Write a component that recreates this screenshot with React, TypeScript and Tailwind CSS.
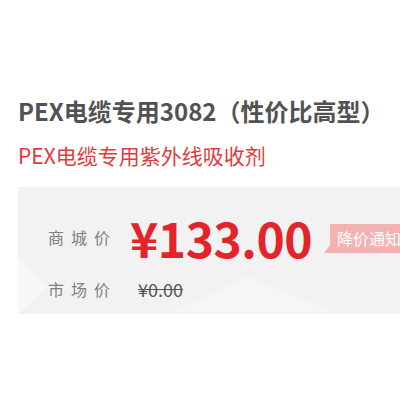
import React from "react";

export default function App() {
  return (
    <div className="w-[400px] h-[400px] bg-white overflow-hidden" style={{ fontFamily: '"Noto Sans CJK SC", "Noto Sans", sans-serif' }}>
      <div className="pt-[94px] pl-[18px]">
        <h1 className="text-[24px] leading-[34px] font-bold text-[#525252] whitespace-nowrap">PEX电缆专用3082（性价比高型）</h1>
        <p className="mt-[12px] text-[21px] leading-[30px] text-[#e4393c] whitespace-nowrap">PEX电缆专用紫外线吸收剂</p>
        <div className="mt-[17px] h-[127px] bg-[#f2f2f2] relative overflow-hidden">
          <svg className="absolute inset-0" width="382" height="127" viewBox="0 0 382 127">
            <polygon points="0,70 30,100 0,127" fill="#f7f7f7" />
            <polygon points="150,127 230,90 320,127" fill="#f6f6f6" />
          </svg>
          <div className="relative pl-[30px] pt-[27px]">
            <div className="flex items-center h-[46px]">
              <span className="shrink-0 whitespace-nowrap text-[16px] tracking-[7px] text-[#808080] w-[82px]">商城价</span>
              <span className="shrink-0 whitespace-nowrap text-[48px] leading-none font-bold text-[#e4242a] tracking-[-0.5px]">¥133.00</span>
              <div className="ml-[18px] mt-[2px] relative flex items-center shrink-0">
                <div className="h-[29px] pl-[7px] pr-[20px] bg-[#f5b2b2] text-white text-[16px] leading-[29px] whitespace-nowrap">降价通知</div>
                <svg className="absolute left-[-6px] bottom-0" width="6" height="8" viewBox="0 0 6 8">
                  <polygon points="6,0 0,8 6,8" fill="#f5b2b2" />
                </svg>
              </div>
            </div>
            <div className="flex items-center h-[24px] mt-[17px]">
              <span className="shrink-0 whitespace-nowrap text-[16px] tracking-[7px] text-[#808080] w-[90px]">市场价</span>
              <span className="text-[18px] text-[#555555] line-through">¥0.00</span>
            </div>
          </div>
        </div>
      </div>
    </div>
  );
}
